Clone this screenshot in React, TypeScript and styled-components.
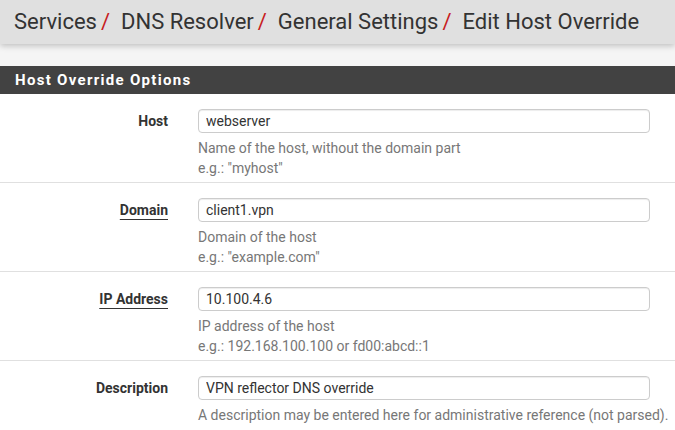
import styled, { createGlobalStyle } from "styled-components";

const GlobalStyle = createGlobalStyle`
  html, body {
    margin: 0;
    padding: 0;
    background: #f5f5f5;
    font-family: Roboto, "Liberation Sans", Arial, sans-serif;
    overflow: hidden;
  }
  * { box-sizing: border-box; }
`;

const Page = styled.div`
  width: 675px;
  height: 430px;
  overflow: hidden;
`;

const Breadcrumb = styled.div`
  height: 44px;
  background: #e0e0e0;
  box-shadow: 0 2px 6px rgba(0, 0, 0, 0.22);
  padding: 6px 14px 0;
  font-size: 22px;
  color: #333;
  white-space: nowrap;
  display: flex;
  align-items: center;
  position: relative;
  z-index: 1;
`;

const Crumb = styled.span`
  line-height: 1;
  padding-bottom: 6px;
`;

const Divider = styled.span`
  color: #c71c22;
  margin: 0 11px 0 4px;
`;

const Spacer = styled.div`
  height: 22px;
  background: #f5f5f5;
`;

const Panel = styled.section`
  background: #fff;
  height: 364px;
`;

const PanelHeading = styled.h2`
  margin: 0;
  height: 28px;
  background: #424242;
  color: #fff;
  font-size: 15px;
  font-weight: 700;
  letter-spacing: 1.3px;
  padding-left: 15px;
  display: flex;
  align-items: center;
`;

const Row = styled.div<{ $last?: boolean }>`
  display: grid;
  grid-template-columns: 168px 1fr;
  column-gap: 30px;
  padding: 15px 25px 4px 0;
  border-bottom: ${(p) => (p.$last ? "none" : "1px solid #e0e0e0")};
`;

const Label = styled.label<{ $link?: boolean }>`
  justify-self: end;
  font-size: 14px;
  font-weight: 700;
  color: #333;
  line-height: 24px;
  text-decoration: ${(p) => (p.$link ? "underline" : "none")};
  text-underline-offset: 4px;
  text-decoration-thickness: 1px;
`;

const Field = styled.div`
  display: flex;
  flex-direction: column;
  min-width: 0;
`;

const Input = styled.input`
  height: 24px;
  width: 100%;
  border: 1px solid #ccc;
  border-radius: 4px;
  box-shadow: inset 0 1px 1px rgba(0, 0, 0, 0.075);
  padding: 0 7px;
  font-family: inherit;
  font-size: 14px;
  color: #333;
  background: #fff;
  outline: none;
`;

const Help = styled.div`
  margin-top: 5px;
  font-size: 14px;
  line-height: 20px;
  color: #777;
  white-space: nowrap;
`;

type Option = {
  label: string;
  link?: boolean;
  value: string;
  help: string[];
};

const options: Option[] = [
  {
    label: "Host",
    value: "webserver",
    help: ["Name of the host, without the domain part", 'e.g.: "myhost"'],
  },
  {
    label: "Domain",
    link: true,
    value: "client1.vpn",
    help: ["Domain of the host", 'e.g.: "example.com"'],
  },
  {
    label: "IP Address",
    link: true,
    value: "10.100.4.6",
    help: ["IP address of the host", "e.g.: 192.168.100.100 or fd00:abcd::1"],
  },
  {
    label: "Description",
    value: "VPN reflector DNS override",
    help: [
      "A description may be entered here for administrative reference (not parsed).",
    ],
  },
];

const crumbs = ["Services", "DNS Resolver", "General Settings", "Edit Host Override"];

export default function App() {
  return (
    <>
      <GlobalStyle />
      <Page>
        <Breadcrumb>
          {crumbs.map((c, i) => (
            <Crumb key={c}>
              {c}
              {i < crumbs.length - 1 && <Divider>/</Divider>}
            </Crumb>
          ))}
        </Breadcrumb>
        <Spacer />
        <Panel>
          <PanelHeading>Host Override Options</PanelHeading>
          {options.map((o, i) => (
            <Row key={o.label} $last={i === options.length - 1}>
              <Label $link={o.link}>{o.label}</Label>
              <Field>
                <Input defaultValue={o.value} />
                <Help>
                  {o.help.map((h) => (
                    <div key={h}>{h}</div>
                  ))}
                </Help>
              </Field>
            </Row>
          ))}
        </Panel>
      </Page>
    </>
  );
}
